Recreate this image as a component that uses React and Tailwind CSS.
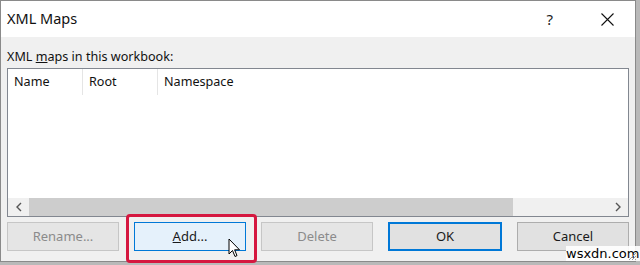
import React from "react";

const font = { fontFamily: '"Noto Sans", "Open Sans", sans-serif' };

const Btn = ({ children, variant }) => {
  const styles = {
    disabled: "bg-[#e5e5e5] border border-[#c6c6c6] text-[#8b8b8b]",
    hover: "bg-[#e5f1fb] border border-[#0078d7] text-[#1a1a1a]",
    primary: "bg-[#e1e1e1] border-2 border-[#0078d7] text-[#1a1a1a]",
    normal: "bg-[#e1e1e1] border border-[#adadad] text-[#1a1a1a]",
  };
  return (
    <div className={`flex-1 basis-0 h-[29px] flex items-center justify-center text-[13px] ${styles[variant]}`}>
      {children}
    </div>
  );
};

const App = () => {
  return (
    <div className="relative w-[640px] h-[265px] bg-[#b9b9b9] overflow-hidden" style={font}>
      <div className="w-[636px] h-[262px] border border-[#8a8a8a] bg-[#f0f0f0] flex flex-col">
        {/* title bar */}
        <div className="h-[36px] bg-white flex items-center pl-[6px] pr-[21px]">
          <span className="text-[14.5px] text-[#111]">XML Maps</span>
          <span className="ml-auto text-[15px] text-[#222] mr-[48px]">?</span>
          <svg width="13" height="13" viewBox="0 0 13 13">
            <path d="M0.5 0.5 L12.5 12.5 M12.5 0.5 L0.5 12.5" stroke="#111" strokeWidth="1.1" />
          </svg>
        </div>

        {/* body */}
        <div className="flex flex-col px-[6px]">
          <div className="h-[31px] flex items-end pb-[1px] text-[12.6px] text-[#111]">
            XML&nbsp;<u>m</u>aps in this workbook:
          </div>
          <div className="h-[149px] border border-[#828790] bg-white flex flex-col">
            <div className="h-[26px] flex text-[12.6px] text-[#111]">
              <div className="w-[75px] flex items-center pl-[6px] border-r border-[#e5e5e5]">Name</div>
              <div className="w-[75px] flex items-center pl-[6px] border-r border-[#e5e5e5]">Root</div>
              <div className="flex-1 flex items-center pl-[6px]">Namespace</div>
            </div>
            <div className="flex-1" />
            <div className="h-[18px] flex bg-[#f0f0f0]">
              <div className="w-[21px] flex items-center justify-center">
                <svg width="8" height="10" viewBox="0 0 8 10">
                  <path d="M6 1 L2 5 L6 9" stroke="#555" strokeWidth="1.4" fill="none" />
                </svg>
              </div>
              <div className="w-[484px] bg-[#cdcdcd]" />
              <div className="flex-1" />
              <div className="w-[21px] flex items-center justify-center">
                <svg width="8" height="10" viewBox="0 0 8 10">
                  <path d="M2 1 L6 5 L2 9" stroke="#555" strokeWidth="1.4" fill="none" />
                </svg>
              </div>
            </div>
          </div>

          <div className="flex gap-[15px] mt-[5px]">
            <Btn variant="disabled">Rename...</Btn>
            <Btn variant="hover"><span><u>A</u>dd...</span></Btn>
            <Btn variant="disabled">Delete</Btn>
            <Btn variant="primary">OK</Btn>
            <Btn variant="normal">Cancel</Btn>
          </div>
        </div>
      </div>

      {/* red highlight around Add */}
      <div className="absolute left-[126px] top-[214px] w-[131px] h-[49px] border-[3px] border-[#d5173f] rounded-[4px]" />

      {/* mouse cursor */}
      <svg className="absolute left-[228px] top-[238px]" width="14" height="21" viewBox="0 0 14 21">
        <path d="M1 1 L1 16 L4.5 12.5 L7 18.5 L9 17.6 L6.6 11.8 L11.5 11.8 Z" fill="white" stroke="black" strokeWidth="1" strokeLinejoin="round" />
      </svg>

      {/* watermark */}
      <div className="absolute left-[566px] top-[246px] h-[15px] bg-white/90 text-[13px] leading-[15px] text-black whitespace-nowrap" style={{ fontFamily: '"DejaVu Sans", sans-serif' }}>
        wsxdn.com
      </div>
      <svg className="absolute left-[628px] top-[251px]" width="9" height="10" viewBox="0 0 9 10">
        <path d="M8 2 L1 9 M8 5 L4 9 M8 8 L7 9" stroke="#9a9a9a" strokeWidth="1" />
      </svg>
    </div>
  );
};

export default App;
